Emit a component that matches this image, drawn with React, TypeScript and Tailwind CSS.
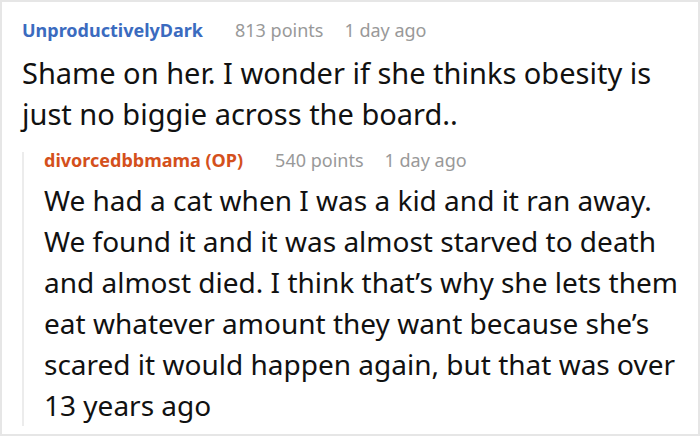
import React from "react";

const font = { fontFamily: '"Noto Sans", "Open Sans", sans-serif' };

function Meta({ name, color, points }: { name: string; color: string; points: string }) {
  return (
    <div className="flex items-center text-[18px] leading-[16px] whitespace-nowrap">
      <span className={`font-bold ${color}`}>{name}</span>
      <span className="ml-[32px] text-[#999]">{points}</span>
      <span className="ml-[21px] text-[#999]">1 day ago</span>
    </div>
  );
}

export default function App() {
  return (
    <div
      className="w-[700px] h-[436px] border-2 border-[#e6e6e6] bg-white text-[#111] overflow-hidden"
      style={font}
    >
      <div className="pl-[20px] pr-[18px] pt-[20px]">
        <Meta name="UnproductivelyDark" color="text-[#3b6bbf]" points="813 points" />
        <p className="mt-[14px] text-[29px] leading-[41px]">
          Shame on her. I wonder if she thinks obesity is just no biggie across the board..
        </p>

        <div className="mt-[18px] border-l-2 border-[#ececec] pl-[20px]">
          <Meta name="divorcedbbmama (OP)" color="text-[#d4501c]" points="540 points" />
          <p className="mt-[12px] -mb-[8px] text-[28px] leading-[41px]">
            We had a cat when I was a kid and it ran away. We found it and it was almost starved
            to death and almost died. I think that’s why she lets them eat whatever amount they
            want because she’s scared it would happen again, but that was over 13 years ago
          </p>
        </div>
      </div>
    </div>
  );
}
